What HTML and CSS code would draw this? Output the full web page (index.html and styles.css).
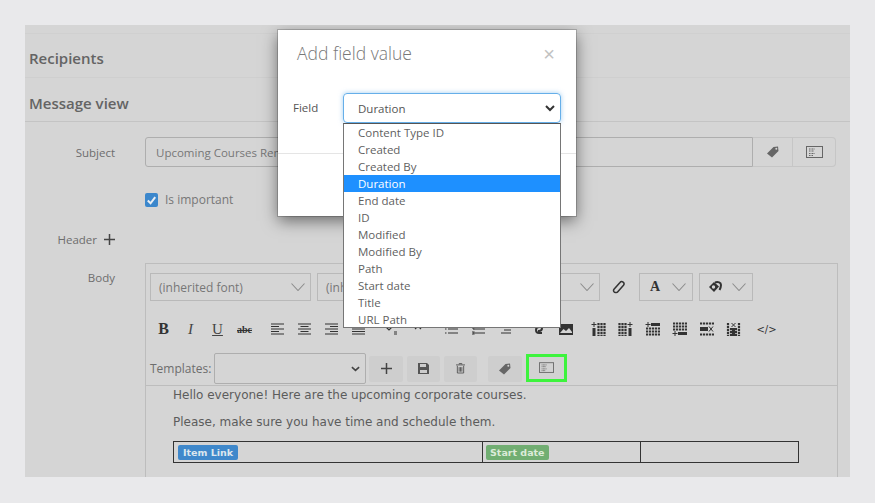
FILE: index.html
```html
<!DOCTYPE html>
<html lang="en">
<head>
<meta charset="utf-8">
<title>Add field value</title>
<link rel="stylesheet" href="styles.css">
</head>
<body>
<svg class="defs" width="0" height="0" aria-hidden="true">
  <symbol id="tag" viewBox="0 0 14 14"><path d="M1 8.500 7.500 2l4.500-.5.500 4.500L6 12.500Z" fill="currentColor"/><circle cx="10.300" cy="3.700" r="1" fill="#d5d5d5"/></symbol>
  <symbol id="field" viewBox="0 0 17 13"><rect x=".5" y=".5" width="16" height="11" fill="none" stroke="currentColor"/><path d="M3 3h6M3 5h5M3 7.500h6M3 9.500h4" stroke="currentColor" stroke-dasharray="1 .5" fill="none"/></symbol>
  <symbol id="chev" viewBox="0 0 14 8"><path d="M.5.500l6.500 7 6.500-7" fill="none" stroke="currentColor" stroke-width="1.100"/></symbol>
  <symbol id="col-add" viewBox="0 0 15 14"><path d="M3 0v5M.5 2.500h5" stroke="currentColor" fill="none"/><path d="M1.500 6h3v8h-3Z" fill="currentColor"/><path d="M7.500 1v13M10.500 1v13M13.500 1v13" stroke="currentColor" stroke-width="2.200" stroke-dasharray="2.200 .8" fill="none"/></symbol>
  <symbol id="row-add" viewBox="0 0 15 14"><path d="M3 0v5M.5 2.500h5" stroke="currentColor" fill="none"/><path d="M6 1h9v3H6Z" fill="currentColor"/><path d="M1 6.500h14M1 9.500h14M1 12.500h14" stroke="currentColor" stroke-width="2.200" stroke-dasharray="2.200 .8" fill="none"/></symbol>
  <symbol id="row-del" viewBox="0 0 15 14"><path d="M1 1.500h14M1 12.500h14" stroke="currentColor" stroke-width="2.200" stroke-dasharray="2.200 .8" fill="none"/><path d="M1 5h8v4H1Z" fill="currentColor"/><path d="M10 4.500l4 5M14 4.500l-4 5" stroke="currentColor" fill="none"/></symbol>
  <symbol id="col-del" viewBox="0 0 15 14"><path d="M2 1v13M13 1v13M5 6v8M10 6v8" stroke="currentColor" stroke-width="2.200" stroke-dasharray="2.200 .8" fill="none"/><path d="M6 6h3v8H6Z" fill="currentColor"/><path d="M5.500 1l4 4M9.500 1l-4 4" stroke="currentColor" fill="none"/></symbol>
</svg>
<main class="panel">
  <div class="section recipients"><h2>Recipients</h2></div>
  <div class="section message"><h2>Message view</h2></div>

  <div class="row subject">
    <label class="lbl">Subject</label>
    <div class="inputgroup">
      <div class="input">Upcoming Courses Reminder</div>
      <div class="addon"><svg class="i14"><use href="#tag"/></svg></div>
      <div class="addon last"><svg class="i17"><use href="#field"/></svg></div>
    </div>
  </div>

  <div class="row important">
    <span class="lbl"></span>
    <span class="check"><svg viewBox="0 0 14 14" width="14" height="14"><path d="M3 7.500 6 10.500 11 4" fill="none" stroke="#e8eef4" stroke-width="2.200"/></svg></span>
    <span class="checktext">Is important</span>
  </div>

  <div class="row header">
    <span class="lbl">Header <svg class="plus" viewBox="0 0 11 11" width="11" height="11"><path d="M5.500 0v11M0 5.500h11" stroke="currentColor" stroke-width="1.500"/></svg></span>
  </div>

  <div class="row body">
    <span class="lbl bodylbl">Body</span>
    <div class="editor">
      <div class="tools1">
        <div class="combo font">(inherited font)<svg class="chev"><use href="#chev"/></svg></div>
        <div class="combo size">(inherited size)<svg class="chev"><use href="#chev"/></svg></div>
        <svg class="clip" viewBox="0 0 14 14" width="14" height="14"><path d="M4 12.500a2 2 0 0 1-2-3.200L8 2.500a2.200 2.200 0 0 1 3.500 2.700L5.800 11.700A2 2 0 0 1 4 12.500Z" fill="none" stroke="#333" stroke-width="1.500"/></svg>
        <div class="combo color"><span class="serif-a">A</span><svg class="chev"><use href="#chev"/></svg></div>
        <div class="combo color"><svg class="bucket" viewBox="0 0 15 12" width="15" height="12"><path d="M1 6 6 1 11 5.500 6 11Z" fill="#333"/><path d="M7 1.500c3-1 6 0 6 2.500 0 2-.7 3.500-1.500 5" fill="none" stroke="#333" stroke-width="2"/><circle cx="5.500" cy="6" r="1.700" fill="#d5d5d5"/></svg><svg class="chev"><use href="#chev"/></svg></div>
      </div>

      <div class="tools2">
        <div class="tg">
          <span class="t b">B</span><span class="t it">I</span><span class="t u">U</span><span class="t st">abc</span>
        </div>
        <div class="tg">
          <span class="t"><svg class="ln" viewBox="0 0 13 12"><path d="M0 1h13M0 3.500h8M0 6h13M0 8.500h8M0 11h13"/></svg></span>
          <span class="t"><svg class="ln" viewBox="0 0 13 12"><path d="M0 1h13M2.500 3.500h8M0 6h13M2.500 8.500h8M0 11h13"/></svg></span>
          <span class="t"><svg class="ln" viewBox="0 0 13 12"><path d="M0 1h13M5 3.500h8M0 6h13M5 8.500h8M0 11h13"/></svg></span>
          <span class="t"><svg class="ln" viewBox="0 0 13 12"><path d="M0 1h13M0 3.500h13M0 6h13M0 8.500h13M0 11h13"/></svg></span>
        </div>
        <div class="tg">
          <span class="t"><svg class="ln" viewBox="0 0 13 12"><path d="M1 4l3 3 3-3M9 9h3M9 11h3"/></svg></span>
          <span class="t"><svg class="ln" viewBox="0 0 13 12"><path d="M3 6l3-3 3 3"/></svg></span>
        </div>
        <div class="tg">
          <span class="t"><svg class="ln" viewBox="0 0 13 12"><path d="M3 2h10M3 6h10M3 10h10M0 2h1.500M0 6h1.500M0 10h1.500"/></svg></span>
          <span class="t"><svg class="ln" viewBox="0 0 13 12"><path d="M3 2h10M3 6h10M3 10h10M0 1v2M0 5h2v2M0 9h2v2H0"/></svg></span>
          <span class="t"><svg class="ln" viewBox="0 0 13 12"><path d="M2 1h10M5 4h7M5 7h7M2 10h10"/></svg></span>
        </div>
        <div class="tg">
          <span class="t"><svg class="ln link" viewBox="0 0 16 12"><path d="M5 2h3a3 3 0 0 1 0 6H7M11 10H8a3 3 0 0 1 0-6h1"/></svg></span>
          <span class="t"><svg class="img" viewBox="0 0 14 11" width="14" height="11"><path d="M0 0h14v11H0Z" fill="#333"/><path d="M1 9l3.500-4L7 7l3-3 3 4v1Z" fill="#d5d5d5"/></svg></span>
        </div>
        <div class="tg">
          <span class="t"><svg class="g"><use href="#col-add"/></svg></span>
          <span class="t"><svg class="g flip"><use href="#col-add"/></svg></span>
          <span class="t"><svg class="g"><use href="#row-add"/></svg></span>
          <span class="t"><svg class="g vflip"><use href="#row-add"/></svg></span>
          <span class="t"><svg class="g"><use href="#row-del"/></svg></span>
          <span class="t"><svg class="g"><use href="#col-del"/></svg></span>
        </div>
        <div class="tg"><span class="t code">&lt;/&gt;</span></div>
      </div>

      <div class="tools3">
        <span class="tpl">Templates:</span>
        <div class="tplselect"><svg class="mini" viewBox="0 0 10 6" width="9" height="6"><path d="M1 1l4 3.500L9 1" fill="none" stroke="#444" stroke-width="1.800"/></svg></div>
        <button class="btn wide"><svg viewBox="0 0 11 11" width="11" height="11"><path d="M5.500 0v11M0 5.500h11" stroke="#444" stroke-width="1.500"/></svg></button>
        <button class="btn"><svg viewBox="0 0 11 11" width="11" height="11"><path d="M0 0h9l2 2v9H0Z" fill="#555"/><path d="M2 1h6v3H2ZM2 7h7v3H2Z" fill="#ccc"/></svg></button>
        <button class="btn"><svg viewBox="0 0 10 11" width="9" height="11"><path d="M0 1.500h10M3.500 1V0h3v1M1.500 2.500v8h7v-8M3.500 4v5M5 4v5M6.500 4v5" fill="none" stroke="#555"/></svg></button>
        <button class="btn wide gap"><svg class="i14"><use href="#tag"/></svg></button>
        <button class="btn green"><svg class="i15"><use href="#field"/></svg></button>
      </div>

      <div class="content">
        <p>Hello everyone! Here are the upcoming corporate courses.</p>
        <p>Please, make sure you have time and schedule them.</p>
        <table>
          <tr>
            <td class="c1"><span class="tk blue">Item Link</span></td>
            <td class="c2"><span class="tk grn">Start date</span></td>
            <td></td>
          </tr>
        </table>
      </div>
    </div>
  </div>

  <div class="modal">
    <div class="mhead">
      <h3>Add field value</h3>
      <span class="close">×</span>
    </div>
    <div class="mbody">
      <span class="flabel">Field</span>
      <div class="fselect">Duration<svg class="fchev" viewBox="0 0 10 7" width="10" height="7"><path d="M1 1l4 4 4-4" fill="none" stroke="#333" stroke-width="2"/></svg></div>
    </div>
    <div class="mfoot"></div>
    <ul class="dropdown">
      <li>Content Type ID</li>
      <li>Created</li>
      <li>Created By</li>
      <li class="sel">Duration</li>
      <li>End date</li>
      <li>ID</li>
      <li>Modified</li>
      <li>Modified By</li>
      <li>Path</li>
      <li>Start date</li>
      <li>Title</li>
      <li>URL Path</li>
    </ul>
  </div>
</main>
</body>
</html>
```

FILE: styles.css
```css
* { box-sizing: border-box; }
html, body { margin: 0; height: 503px; overflow: hidden; }
body {
  background: #e9e9eb;
  padding: 25px;
  font-family: "Open Sans", "Noto Sans", sans-serif;
  font-size: 11.500px;
  color: #666;
}
.defs { position: absolute; }
.panel {
  position: relative;
  width: 825px;
  height: 452px;
  background: #d5d5d5;
  overflow: hidden;
  padding-top: 8px;
}
.section { border-bottom: 1px solid #cfcfcf; padding-left: 4px; }
.recipients { border-top: 1px solid #d0d0d0; height: 45px; padding-top: 14px; }
.message { height: 44px; padding-top: 15px; border-bottom: 1px solid #c4c4c4; }
h2 { margin: 0; font-size: 15px; line-height: 20px; font-weight: 600; color: #646464; }
.row { display: flex; }
.lbl { width: 90px; flex: none; text-align: right; color: #6d6d6d; font-size: 11.500px; }
.subject { margin-top: 15px; height: 30px; align-items: center; }
.subject .lbl { padding-top: 1px; }
.inputgroup { display: flex; width: 692px; margin-left: 30px; height: 30px; }
.input {
  width: 608px; border: 1px solid #aeaeae; border-radius: 3px 0 0 3px;
  padding: 1px 10px 0; line-height: 28px; color: #777; white-space: nowrap;
}
.addon {
  width: 40px; display: flex; align-items: center; justify-content: center;
  border: 1px solid #c6c6c6; border-left: 0; color: #666;
}
.addon.last { width: 43px; border-radius: 0 4px 4px 0; }
.i14 { width: 14px; height: 14px; }
.i15 { width: 15px; height: 12px; }
.i17 { width: 17px; height: 13px; }
.important { margin-top: 25px; height: 16px; align-items: center; }
.check {
  margin-left: 30px; width: 13px; height: 14px; background: #3b87cc; border-radius: 2px;
  display: flex; align-items: center; justify-content: center;
}
.checktext { margin-left: 7px; color: #777; font-size: 12px; padding-bottom: 2px; }
.header { margin-top: 23px; height: 18px; align-items: center; }
.header .lbl { padding-bottom: 2px; }
.plus { color: #444; margin-left: 4px; vertical-align: -1px; }
.body { margin-top: 14px; }
.bodylbl { padding-top: 7px; }
.editor {
  margin-left: 30px; width: 693px; height: 240px;
  border: 1px solid #bdbdbd; border-bottom: 0; padding-top: 9px;
}
.tools1 { display: flex; align-items: center; padding-left: 4px; height: 28px; }
.combo {
  display: flex; align-items: center; justify-content: space-between;
  height: 28px; border: 1px solid #b9b9b9; padding: 0 5px 0 8px;
  color: #777; font-size: 12px; white-space: nowrap;
}
.font { width: 161px; }
.size { width: 283px; margin-left: 6px; }
.color { width: 54px; padding: 0 6px 0 8px; }
.clip { margin: 0 13px 0 12px; }
.color + .color { margin-left: 6px; }
.chev { width: 14px; height: 8px; color: #8d8d8d; flex: none; }
.serif-a { font: bold 14px "Liberation Serif", serif; color: #333; margin-left: 2px; }
.bucket { flex: none; }
.tools2 { display: flex; gap: 6px; height: 28px; margin-top: 14px; padding-left: 4px; align-items: center; }
.tg { display: flex; }
.t {
  width: 27px; height: 20px; display: flex; align-items: center; justify-content: center;
  color: #333; font: 15px "Liberation Serif", serif;
}
.b { font-weight: bold; font-size: 16px; }
.it { font-style: italic; color: #444; }
.u { text-decoration: underline; color: #444; }
.st { text-decoration: line-through; font-size: 10px; font-weight: bold; }
.ln { width: 13px; height: 12px; fill: none; stroke: #333; stroke-width: 1.200; }
.ln.link { width: 16px; stroke-width: 2; }
.g { width: 15px; height: 14px; color: #333; }
.flip { transform: scaleX(-1); }
.vflip { transform: scaleY(-1); }
.code { font: 10px "DejaVu Sans", sans-serif; }
.tools3 { display: flex; align-items: center; height: 33px; margin-top: 9px; padding-left: 4px; }
.tpl { width: 64px; color: #6d6d6d; font-size: 12px; white-space: nowrap; }
.tplselect {
  width: 152px; height: 31px; border: 1px solid #aeaeae; border-radius: 2px;
  display: flex; align-items: center; justify-content: flex-end; padding-right: 5px;
}
.btn {
  width: 33px; height: 26px; margin-left: 4px; padding: 0; border: 0; border-radius: 2px;
  background: #cecece; color: #666;
  display: flex; align-items: center; justify-content: center;
}
.btn.wide { width: 34px; }
.tplselect + .btn { margin-left: 3px; }
.btn.gap { margin-left: 11px; }
.green { width: 41px; height: 28px; background: #d2d2d2; border: 3px solid #3df33d; border-radius: 0; color: #666; margin-bottom: 1px; }
.content {
  border-top: 1px solid #bdbdbd; padding: 0 38px 0 27px;
  font: 12px "DejaVu Sans", Verdana, sans-serif; color: #5c5c5c;
}
.content p { margin: 0; line-height: 15px; }
.content p:first-child { margin-top: 2px; }
.content p + p { margin-top: 12px; }
table {
  margin-top: 11px; width: 626px; height: 21px; border-collapse: collapse; table-layout: fixed;
}
td { border: 1px solid #333; padding: 0 0 0 4px; height: 21px; line-height: 14px; }
.c1 { width: 309px; }
.c2 { width: 158px; }
.tk {
  display: inline-block; padding: 0 5px; height: 15px; border-radius: 2px;
  font: bold 9.500px/15px "DejaVu Sans", sans-serif; color: #dbe6ee; vertical-align: top;
}
.blue { background: #3f88cb; }
.grn { background: #71ae72; color: #dcebd9; padding: 0 4px; margin-left: -1px; }

.modal {
  position: absolute; left: 253px; top: 5px; width: 298px; height: 186px;
  background: #fff; box-shadow: 0 0 0 1px rgba(0,0,0,.18), 0 5px 15px rgba(0,0,0,.5);
  color: #555;
}
.mhead { display: flex; justify-content: space-between; height: 49px; padding: 10px 21px 0 19px; }
h3 { margin: 0; font-size: 17.500px; line-height: 26px; font-weight: 300; color: #787878; }
.close { font: 20px/30px "Liberation Sans", sans-serif; color: #c2c2c2; margin-top: -1px; }
.mbody { display: flex; height: 75px; padding: 14px 15px 0 15px; border-bottom: 1px solid #e5e5e5; }
.flabel { width: 50px; line-height: 30px; color: #555; }
.fselect {
  width: 218px; height: 30px; border: 1px solid #66afe9; border-radius: 4px;
  box-shadow: 0 0 5px rgba(102,175,233,.6);
  padding: 0 5px 0 14px; line-height: 29px; color: #555;
  display: flex; align-items: center; justify-content: space-between;
}
.fchev { flex: none; }
.dropdown {
  position: absolute; left: 65px; top: 93px; width: 218px; height: 205px;
  margin: 0; padding: 0; list-style: none; background: #fff;
  border: 1px solid #767676; border-top-color: #555;
}
.dropdown li { height: 17px; line-height: 17px; padding-left: 14px; color: #5f5f5f; }
.dropdown .sel { background: #1e90ff; color: #fff; }
```
